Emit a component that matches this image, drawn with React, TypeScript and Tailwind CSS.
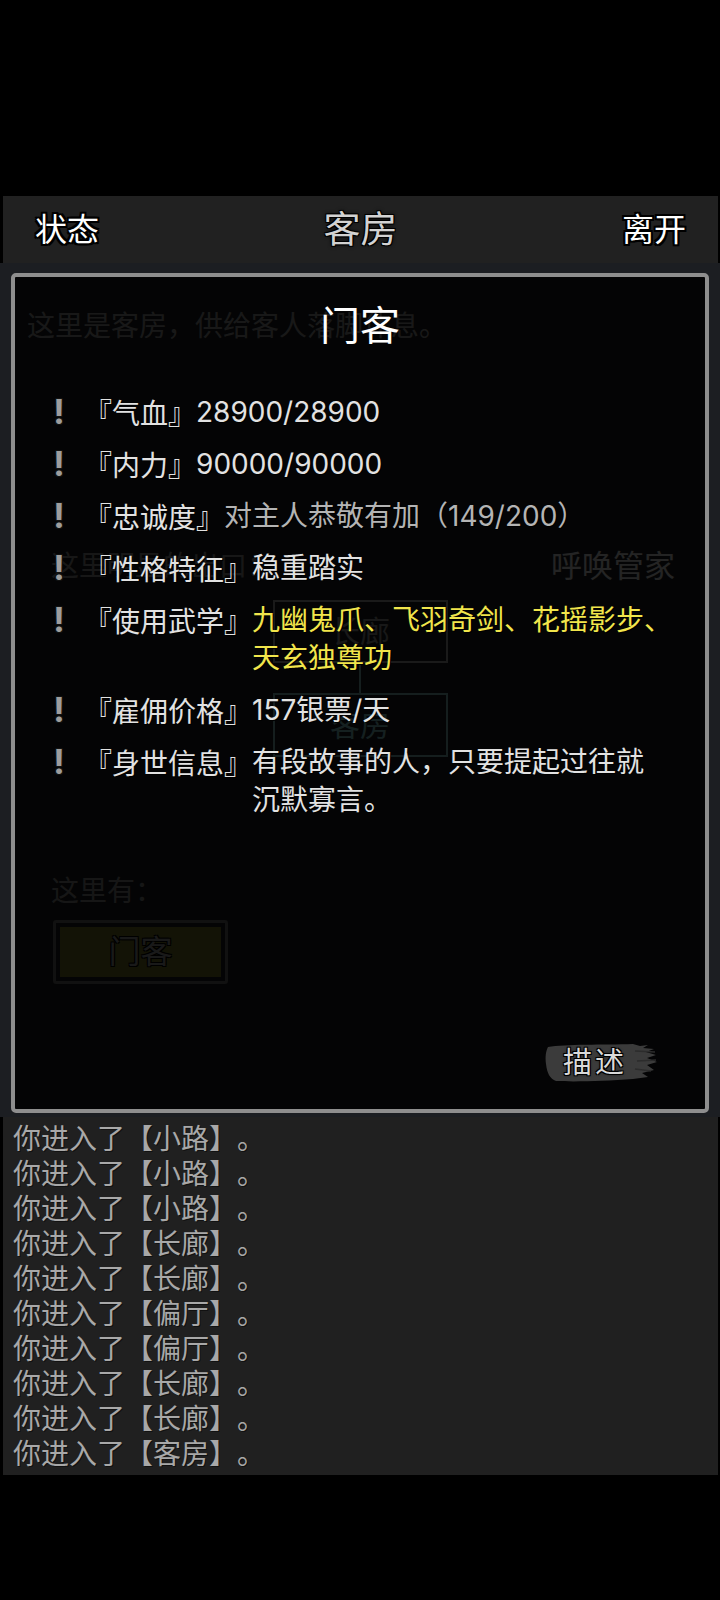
import React from "react";

type Tone = "white" | "grey" | "yellow";

type InfoRow = {
  label: string;
  value: string;
  tone: Tone;
};

const infoRows: InfoRow[] = [
  { label: "『气血』", value: "28900/28900", tone: "white" },
  { label: "『内力』", value: "90000/90000", tone: "white" },
  { label: "『忠诚度』", value: "对主人恭敬有加（149/200）", tone: "grey" },
  { label: "『性格特征』", value: "稳重踏实", tone: "white" },
  { label: "『使用武学』", value: "九幽鬼爪、飞羽奇剑、花摇影步、天玄独尊功", tone: "yellow" },
  { label: "『雇佣价格』", value: "157银票/天", tone: "white" },
  { label: "『身世信息』", value: "有段故事的人，只要提起过往就\n沉默寡言。", tone: "white" },
];

const toneClass: Record<Tone, string> = {
  white: "text-[#e2e2e2]",
  grey: "text-[#b4b4b4]",
  yellow: "text-[#f1e54c]",
};

const logLines = ["小路", "小路", "小路", "长廊", "长廊", "偏厅", "偏厅", "长廊", "长廊", "客房"];

function BrushButton({ label }: { label: string }) {
  return (
    <button className="relative w-[114px] h-[39px] flex items-center justify-start pl-[20px]">
      {/* ink brush stroke behind the label */}
      <svg className="absolute inset-0" width="114" height="39" viewBox="0 0 114 39">
        <path
          d="M5 4 C22 1 60 2 90 1 L97 3 L105 2 L100 5 L111 6 L103 9 L113 12 L104 15 L114 19 L104 22 L111 27 L99 30 L105 34 L90 36 C62 38 32 39 13 38 C7 36 4 30 3 21 C2 13 3 8 5 4 Z"
          fill="#3b3b3b"
        />
        <path d="M92 8 L112 9 M94 18 L113 17 M92 26 L108 28" stroke="#2c2c2c" strokeWidth="1.5" />
      </svg>
      <span className="relative text-[29px] leading-none tracking-[3px] text-[#dadada] [text-shadow:1px_1px_0_#000,-1px_-1px_0_#000,1px_-1px_0_#000,-1px_1px_0_#000,0_0_3px_#000]">
        {label}
      </span>
    </button>
  );
}

export default function App() {
  return (
    <div className="w-[720px] h-[1600px] bg-black [font-family:Inter,'Noto_Sans_CJK_SC',sans-serif] [text-spacing-trim:space-all] overflow-hidden">
      <div className="h-[196px]" />

      {/* Top bar */}
      <header className="ml-[3px] mr-[2px] h-[67px] bg-[#212121] flex items-center justify-between px-[32px]">
        <span className="text-[32px] leading-none text-white [text-shadow:2px_2px_0_#000,-2px_-2px_0_#000,2px_-2px_0_#000,-2px_2px_0_#000,0_2px_0_#000,2px_0_0_#000,0_-2px_0_#000,-2px_0_0_#000]">
          状态
        </span>
        <span className="text-[37px] leading-none text-[#d2d2d2] [text-shadow:1px_1px_0_#000,-1px_-1px_0_#000,1px_-1px_0_#000,-1px_1px_0_#000,0_0_4px_#000]">
          客房
        </span>
        <span className="text-[32px] leading-none text-white [text-shadow:2px_2px_0_#000,-2px_-2px_0_#000,2px_-2px_0_#000,-2px_2px_0_#000,0_2px_0_#000,2px_0_0_#000,0_-2px_0_#000,-2px_0_0_#000]">
          离开
        </span>
      </header>

      {/* Room page (dimmed by the dialog on top) */}
      <main className="relative h-[854px] bg-[#1c1e22]">
        <p className="pt-[44px] pl-[27px] text-[28px] leading-[38px] text-[#a4a4a4]">这里是客房，供给客人落脚休息。</p>

        <div className="mt-[202px] pl-[51px] pr-[45px] flex items-center justify-between">
          <span className="text-[28px] leading-[38px] text-[#9a9a9a]">这里明显的出口：</span>
          <span className="text-[31px] leading-[38px] text-[#eeeeee]">呼唤管家</span>
        </div>

        {/* map */}
        <div className="mt-[15px] flex flex-col items-center">
          <div className="w-[175px] h-[63px] border-2 border-[#b0b0b0] flex items-center justify-center text-[30px] text-[#a0a0a0]">
            长廊
          </div>
          <div className="w-[2px] h-[30px] bg-[#90c8c8]" />
          <div className="w-[175px] h-[64px] border-2 border-[#90c8c8] flex items-center justify-center text-[30px] text-[#90d8d8]">
            客房
          </div>
        </div>

        <p className="mt-[115px] pl-[51px] text-[28px] leading-[38px] text-[#959595]">这里有：</p>
        <div className="mt-[10px] ml-[53px] w-[175px] h-[64px] border-[3px] border-[#707070] rounded-[3px] p-[4px]">
          <div className="w-full h-full bg-[#80802c] flex items-center justify-center text-[32px] text-[#a8a8a8] [text-shadow:1px_1px_0_#000,-1px_-1px_0_#000,1px_-1px_0_#000,-1px_1px_0_#000]">
            门客
          </div>
        </div>

        {/* Retainer dialog */}
        <section className="absolute top-[10px] left-[11px] w-[698px] h-[840px] border-4 border-[#8e8e8e] rounded-[5px] bg-black/85 flex flex-col">
          <h1 className="pt-[29px] text-center text-[40px] leading-[40px] text-white font-normal">门客</h1>

          <div className="mt-[47px] flex flex-col gap-[14px] pl-[30px] pr-[25px]">
            {infoRows.map((row) => (
              <div key={row.label} className="flex items-start text-[28px] leading-[38px]">
                <span className="w-[28px] shrink-0 text-center text-[34px] font-bold text-[#9d9d9d] [text-shadow:1px_1px_0_#111,-1px_-1px_0_#111,1px_-1px_0_#111,-1px_1px_0_#111]">
                  !
                </span>
                <span className="ml-[11px] shrink-0 whitespace-nowrap [font-family:'Noto_Sans_CJK_SC',sans-serif] text-[#e2e2e2] [text-shadow:1px_1px_0_#000]">
                  {row.label}
                </span>
                <span className={`flex-1 whitespace-pre-line [text-shadow:1px_1px_0_#000] ${toneClass[row.tone]}`}>
                  {row.value}
                </span>
              </div>
            ))}
          </div>

          <div className="mt-auto flex justify-end pr-[48px] pb-[27px]">
            <BrushButton label="描述" />
          </div>
        </section>
      </main>

      {/* Message log */}
      <div className="ml-[3px] mr-[2px] h-[358px] bg-[#202020] pt-[5px] pl-[10px]">
        {logLines.map((place, i) => (
          <p
            key={i}
            className="text-[28px] leading-[35px] text-[#a8a8a8] [text-shadow:1px_1px_0_#111]"
          >
            你进入了【{place}】。
          </p>
        ))}
      </div>
    </div>
  );
}
